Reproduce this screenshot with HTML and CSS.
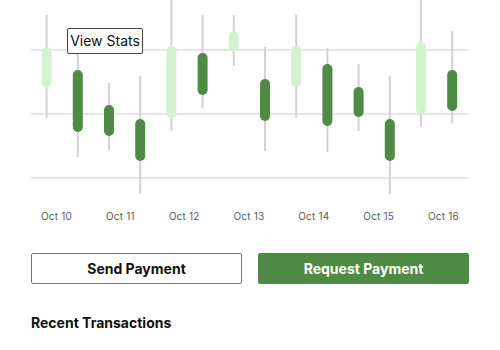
FILE: index.html
```html
<!DOCTYPE html>
<html lang="en">
<head>
  <meta charset="UTF-8">
  <meta name="viewport" content="width=device-width, initial-scale=1.0">
  <title>Wallet</title>
  <link rel="stylesheet" href="styles.css">
</head>
<body>
  <div class="page">
    <div class="chart">
      <svg class="chart-svg" width="437" height="200" viewBox="0 0 437 200">
        <g class="grid">
          <line x1="0" y1="50" x2="437" y2="50"/>
          <line x1="0" y1="114" x2="437" y2="114"/>
          <line x1="0" y1="178" x2="437" y2="178"/>
        </g>
        <g class="wicks">
          <line x1="15.6" y1="15" x2="15.6" y2="118"/>
          <line x1="46.8" y1="40" x2="46.8" y2="157"/>
          <line x1="78" y1="83" x2="78" y2="150"/>
          <line x1="109.2" y1="76" x2="109.2" y2="194"/>
          <line x1="140.4" y1="0" x2="140.4" y2="131"/>
          <line x1="171.6" y1="15" x2="171.6" y2="108"/>
          <line x1="202.8" y1="15" x2="202.8" y2="66"/>
          <line x1="234" y1="47" x2="234" y2="151"/>
          <line x1="265.2" y1="15" x2="265.2" y2="118"/>
          <line x1="296.4" y1="48" x2="296.4" y2="152"/>
          <line x1="327.6" y1="64" x2="327.6" y2="131"/>
          <line x1="358.8" y1="76" x2="358.8" y2="194"/>
          <line x1="390" y1="0" x2="390" y2="127"/>
          <line x1="421.2" y1="31" x2="421.2" y2="123"/>
        </g>
        <g class="bodies">
          <rect class="up" x="10.6" y="47" width="10" height="40" rx="5"/>
          <rect class="down" x="41.8" y="70" width="10" height="62" rx="5"/>
          <rect class="down" x="73" y="105" width="10" height="31" rx="5"/>
          <rect class="down" x="104.2" y="119" width="10" height="42" rx="5"/>
          <rect class="up" x="135.4" y="46" width="10" height="72" rx="5"/>
          <rect class="down" x="166.6" y="53" width="10" height="42" rx="5"/>
          <rect class="up" x="197.8" y="31" width="10" height="20" rx="5"/>
          <rect class="down" x="229" y="79" width="10" height="42" rx="5"/>
          <rect class="up" x="260.2" y="46" width="10" height="41" rx="5"/>
          <rect class="down" x="291.4" y="64" width="10" height="62" rx="5"/>
          <rect class="down" x="322.6" y="87" width="10" height="30" rx="5"/>
          <rect class="down" x="353.8" y="119" width="10" height="42" rx="5"/>
          <rect class="up" x="385" y="42" width="10" height="72" rx="5"/>
          <rect class="down" x="416.2" y="70" width="10" height="41" rx="5"/>
        </g>
      </svg>
      <div class="tooltip">View Stats</div>
      <div class="dates">
        <span>Oct 10</span>
        <span>Oct 11</span>
        <span>Oct 12</span>
        <span>Oct 13</span>
        <span>Oct 14</span>
        <span>Oct 15</span>
        <span>Oct 16</span>
      </div>
    </div>

    <div class="actions">
      <button class="btn btn-outline">Send Payment</button>
      <button class="btn btn-primary">Request Payment</button>
    </div>

    <h2 class="section-title">Recent Transactions</h2>
  </div>
</body>
</html>
```

FILE: styles.css
```css
* {
  margin: 0;
  padding: 0;
  box-sizing: border-box;
}
body {
  font-family: Inter, 'Liberation Sans', sans-serif;
  background: #fff;
  color: #111;
}
.page {
  width: 500px;
  height: 350px;
  padding: 0 31px;
  overflow: hidden;
}
.chart {
  position: relative;
}
.chart-svg {
  display: block;
}
.grid line {
  stroke: #dedede;
  stroke-width: 1.5;
}
.wicks line {
  stroke: #d2d2d2;
  stroke-width: 2;
}
.bodies .up {
  fill: #d3f2cf;
}
.bodies .down {
  fill: #4f8b45;
}
.tooltip {
  position: absolute;
  left: 36px;
  top: 28px;
  width: 76px;
  height: 26px;
  background: #fff;
  border: 1px solid #444;
  border-radius: 2px;
  font-size: 14px;
  font-weight: 400;
  line-height: 24px;
  text-align: center;
  color: #111;
}
.dates {
  display: flex;
  justify-content: space-between;
  padding: 0 10px;
  margin-top: 9px;
  font-size: 10px;
  line-height: 14px;
  letter-spacing: 0.2px;
  color: #5a5a5a;
}
.actions {
  display: flex;
  gap: 16px;
  margin-top: 30px;
}
.btn {
  flex: 1;
  height: 31px;
  font-family: inherit;
  font-size: 14px;
  font-weight: 700;
  border-radius: 2px;
  cursor: pointer;
}
.btn-outline {
  background: #fff;
  color: #111;
  border: 1px solid #777;
}
.btn-primary {
  background: #4f8b45;
  color: #fff;
  border: 1px solid #4f8b45;
}
.section-title {
  margin-top: 29px;
  font-size: 14px;
  font-weight: 700;
  line-height: 20px;
}
```
